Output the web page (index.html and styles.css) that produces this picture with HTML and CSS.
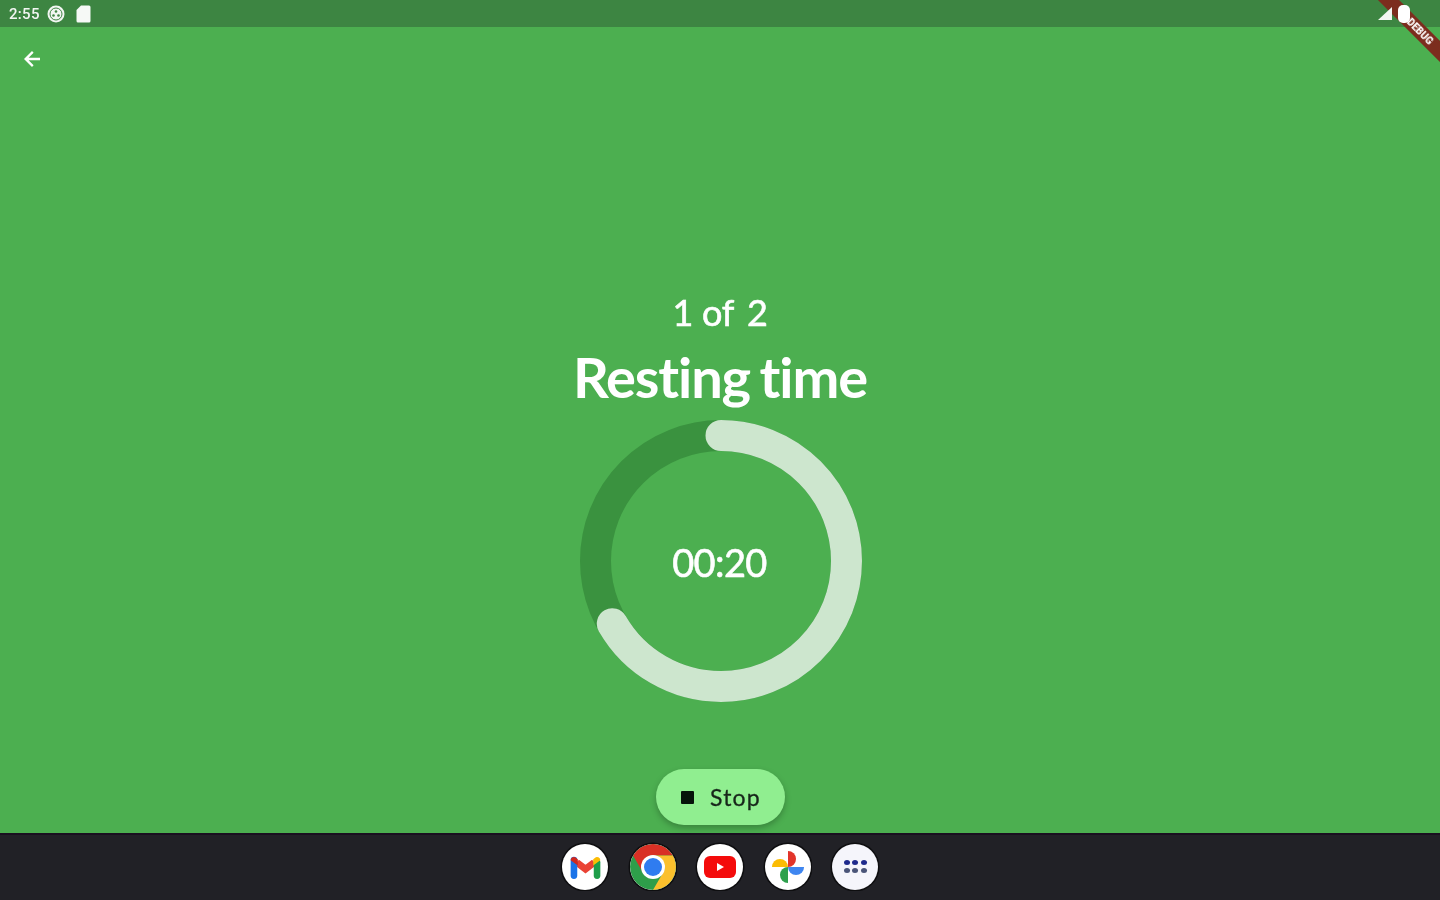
FILE: index.html
```html
<!DOCTYPE html>
<html lang="en">
<head>
    <meta charset="UTF-8">
    <title>Resting time</title>
    <link rel="stylesheet" href="styles.css">
</head>
<body>
    <div class="screen">
        <div class="status-bar">
            <div class="status-left">
                <span class="clock">2:55</span>
                <svg class="status-icon" width="18" height="18" viewBox="0 0 18 18">
                    <circle cx="9" cy="9" r="8.500" fill="#f2f6f2"/>
                    <circle cx="9" cy="9" r="6" fill="none" stroke="#3f8544" stroke-width="1"/>
                    <circle cx="9" cy="6.500" r="1.300" fill="#3f8544"/>
                    <circle cx="6.500" cy="10.500" r="1.300" fill="#3f8544"/>
                    <circle cx="11.500" cy="10.500" r="1.300" fill="#3f8544"/>
                </svg>
                <svg class="status-icon sim" width="15" height="18" viewBox="0 0 15 18">
                    <path d="M5 0.500h8a1.500 1.500 0 0 1 1.500 1.500v14a1.500 1.500 0 0 1-1.500 1.500H2a1.500 1.500 0 0 1-1.500-1.500V5z" fill="#f6f9f6"/>
                </svg>
            </div>
            <div class="status-right">
                <svg width="14" height="13" viewBox="0 0 14 13"><path d="M14 0v13H0z" fill="#f2f6f2"/></svg>
                <svg width="12" height="18" viewBox="0 0 12 18"><rect x="0" y="0" width="12" height="18" rx="5" fill="#fff"/></svg>
            </div>
        </div>

        <main class="content">
            <button class="back-btn" aria-label="Back">
                <svg width="24" height="24" viewBox="0 0 24 24">
                    <path d="M20 10.700H8.600l5-5L12 4l-8 8 8 8 1.600-1.700-5-5H20z" fill="#fff"/>
                </svg>
            </button>

            <div class="timer-block">
                <div class="round-count">1 of<span class="round-total">2</span></div>
                <h1 class="phase-title">Resting time</h1>
                <div class="ring">
                    <svg width="282" height="282" viewBox="0 0 282 282">
                        <circle class="ring-track" cx="141" cy="141" r="125.500"/>
                        <circle class="ring-progress" cx="141" cy="141" r="125.500" pathLength="360" stroke-dasharray="240 360" transform="rotate(-90 141 141)"/>
                    </svg>
                    <div class="ring-time">00:20</div>
                </div>
            </div>

            <button class="stop-btn">
                <span class="stop-square"></span>
                <span>Stop</span>
            </button>
        </main>

        <nav class="dock">
            <div class="dock-app">
                <svg width="33" height="27" viewBox="0 0 30 26" preserveAspectRatio="none">
                    <path d="M7 9l8 6.500L23 9" fill="none" stroke="#ea4335" stroke-width="6.500"/>
                    <path d="M4.500 6.500V22" fill="none" stroke="#1a73e8" stroke-width="6" stroke-linecap="round"/>
                    <path d="M25.500 9V22" fill="none" stroke="#1e9e4a" stroke-width="6" stroke-linecap="round"/>
                    <path d="M1.500 7a3 3 0 0 1 5-2.300L8 6v6L1.500 7z" fill="#d0281e"/>
                    <path d="M22 6l1.500-1.300a3 3 0 0 1 5 2.300L22 12z" fill="#fbbc04"/>
                </svg>
            </div>
            <div class="dock-app chrome">
                <svg width="46" height="46" viewBox="0 0 46 46">
                    <circle cx="23" cy="23" r="23" fill="#2e9e4a"/>
                    <path d="M23 11.500H42.900A23 23 0 0 0 3.100 11.500L13 28.750A11.500 11.500 0 0 1 23 11.500z" fill="#d93025"/>
                    <path d="M33 28.750L23 46A23 23 0 0 0 42.900 11.500H23A11.500 11.500 0 0 1 33 28.750z" fill="#fbc02d"/>
                    <circle cx="23" cy="23" r="12" fill="#fff"/>
                    <circle cx="23" cy="23" r="9" fill="#2f7cf0"/>
                </svg>
            </div>
            <div class="dock-app">
                <svg width="32" height="22" viewBox="0 0 32 22">
                    <rect width="32" height="22" rx="6" fill="#f40b0b"/>
                    <path d="M13 7l7 4-7 4z" fill="#fff"/>
                </svg>
            </div>
            <div class="dock-app">
                <svg width="34" height="34" viewBox="0 0 36 36">
                    <path d="M18 18H1a8.500 8.500 0 0 1 17 0z" fill="#fbbc04"/>
                    <path d="M18 18V1a8.500 8.500 0 0 1 0 17z" fill="#e2342a"/>
                    <path d="M18 18h17a8.500 8.500 0 0 1-17 0z" fill="#3f86f0"/>
                    <path d="M18 18v17a8.500 8.500 0 0 1 0-17z" fill="#2ea04d"/>
                </svg>
            </div>
            <div class="dock-app app-drawer">
                <div class="app-grid">
                    <i class="top"></i><i class="top"></i><i class="top"></i>
                    <i></i><i></i><i></i>
                </div>
            </div>
        </nav>

        <div class="debug-banner">DEBUG</div>
    </div>
</body>
</html>
```

FILE: styles.css
```css
* {
    box-sizing: border-box;
}
html, body {
    margin: 0;
    height: 100%;
    overflow: hidden;
}
body {
    font-family: "Lato", sans-serif;
    color: #fff;
    background: #4caf50;
}
.screen {
    position: relative;
    display: flex;
    flex-direction: column;
    width: 1440px;
    height: 900px;
    overflow: hidden;
}
.status-bar {
    display: flex;
    align-items: center;
    justify-content: space-between;
    height: 27px;
    padding: 0 30px 0 9px;
    background: #3d8542;
    flex-shrink: 0;
}
.status-left, .status-right {
    display: flex;
    align-items: center;
    filter: blur(0.7px);
}
.status-left {
    gap: 7px;
}
.status-right {
    position: relative;
    z-index: 2;
    gap: 6px;
}
.clock {
    font-family: "Roboto", sans-serif;
    font-size: 15px;
    font-weight: 500;
    color: #f2f6f2;
    letter-spacing: 0.3px;
}
.sim {
    margin-left: 4px;
}
.content {
    position: relative;
    flex: 1;
    display: flex;
    flex-direction: column;
    align-items: center;
    background: #4caf50;
}
.back-btn {
    position: absolute;
    left: 20px;
    top: 20px;
    width: 24px;
    height: 24px;
    padding: 0;
    border: none;
    background: none;
    filter: blur(0.5px);
}
.timer-block {
    display: flex;
    flex-direction: column;
    align-items: center;
    padding-top: 263px;
}
.round-count {
    font-size: 36px;
    line-height: 44px;
    font-weight: 400;
    letter-spacing: -0.3px;
    -webkit-text-stroke: 0.6px #fff;
    filter: blur(0.5px);
}
.round-total {
    margin-left: 13px;
}
.phase-title {
    margin: 9px 0 0;
    font-size: 56px;
    line-height: 68px;
    font-weight: 700;
    letter-spacing: -1.1px;
    word-spacing: -3px;
    filter: blur(0.5px);
}
.ring {
    position: relative;
    width: 282px;
    height: 282px;
    margin: 8.500px 0 0 2px;
    filter: blur(0.3px);
}
.ring svg {
    display: block;
}
.ring-track, .ring-progress {
    fill: none;
    stroke-width: 31;
}
.ring-track {
    stroke: #3a923f;
}
.ring-progress {
    stroke: #cde6ce;
    stroke-linecap: round;
}
.ring-time {
    position: absolute;
    inset: 3px 3px 0 0;
    display: flex;
    align-items: center;
    justify-content: center;
    font-size: 38px;
    font-weight: 400;
    letter-spacing: -0.6px;
    -webkit-text-stroke: 0.6px #fff;
}
.stop-btn {
    position: absolute;
    left: 656px;
    top: 742px;
    display: flex;
    align-items: center;
    gap: 16px;
    width: 129px;
    height: 56px;
    padding: 0 0 0 25px;
    border: none;
    border-radius: 28px;
    background: #90ee90;
    color: #17251a;
    font-family: "Lato", sans-serif;
    font-size: 23px;
    font-weight: 400;
    letter-spacing: 1.2px;
    -webkit-text-stroke: 0.3px #17251a;
    box-shadow: 0 3px 6px rgba(0, 0, 0, 0.25);
}
.stop-btn span {
    filter: blur(0.5px);
}
.stop-square {
    width: 13px;
    height: 13px;
    background: #06130a;
    border-radius: 1px;
}
.dock {
    display: flex;
    align-items: center;
    justify-content: center;
    gap: 21.5px;
    height: 67px;
    padding-bottom: 2px;
    flex-shrink: 0;
    background: #212126;
    border-top: 2px solid #1a1020;
}
.dock-app {
    display: flex;
    align-items: center;
    justify-content: center;
    width: 46px;
    height: 46px;
    border-radius: 50%;
    background: #fff;
    overflow: hidden;
    box-shadow: 0 0 0 1.500px #0e0e10;
    filter: blur(0.5px);
}
.app-drawer {
    background: #f5f5fb;
}
.app-grid {
    display: grid;
    grid-template-columns: repeat(3, 6px);
    gap: 3px 2.500px;
}
.app-grid i {
    width: 6px;
    height: 5px;
    border-radius: 50%;
    background: #4a5478;
}
.app-grid i.top {
    background: #1f2a8c;
}
.debug-banner {
    position: absolute;
    left: 1360px;
    top: 24px;
    width: 120px;
    height: 15px;
    transform: rotate(45deg);
    background: #7c2d1e;
    color: #fff;
    font-family: "Roboto", sans-serif;
    font-size: 10px;
    font-weight: 900;
    line-height: 15px;
    text-align: center;
    filter: blur(0.7px);
}
```
